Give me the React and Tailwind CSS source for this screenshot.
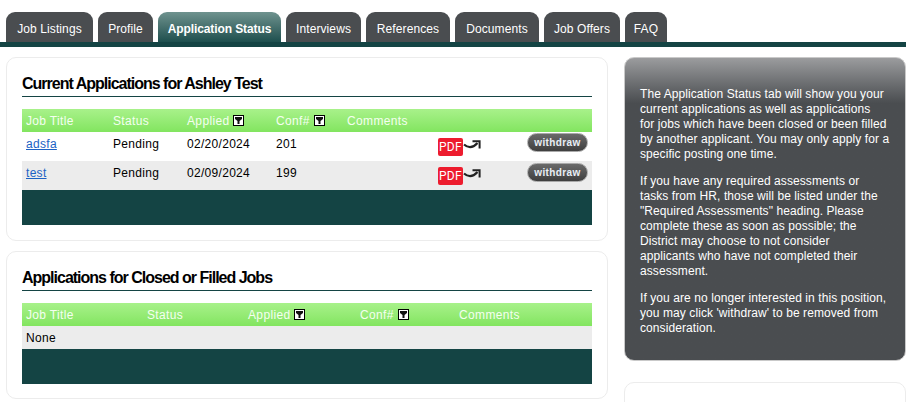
import React from "react";

const tabs = [
  { label: "Job Listings", w: "w-[87px]" },
  { label: "Profile", w: "w-[55px]" },
  { label: "Application Status", w: "w-[123px]", active: true },
  { label: "Interviews", w: "w-[75px]" },
  { label: "References", w: "w-[84px]" },
  { label: "Documents", w: "w-[84px]" },
  { label: "Job Offers", w: "w-[76px]" },
  { label: "FAQ", w: "w-[42px]" },
];

const SortIcon = () => (
  <span className="ml-[4px] inline-flex h-[11px] w-[11px] items-center justify-center border border-black bg-white">
    <svg width="7" height="7" viewBox="0 0 7 7">
      <path d="M0 0H7V2L4.5 4V7H2.5V4L0 2Z" fill="#111" />
    </svg>
  </span>
);

const PdfIcon = () => (
  <div className="flex items-start">
    <span className="flex h-[18px] w-[25px] items-center justify-center rounded-[2px] bg-[#ed1c2e] text-[12px] leading-none text-white [font-family:'Roboto',sans-serif]">
      PDF
    </span>
    <svg width="18" height="12" viewBox="0 0 18 12" className="mt-[2px]">
      <path d="M1 4.5C5 8 10 8 14.5 3" fill="none" stroke="#222" strokeWidth="2.2" />
      <path d="M9.5 1.2H16.6V8.5" fill="none" stroke="#222" strokeWidth="2" />
    </svg>
  </div>
);

const WithdrawButton = () => (
  <span className="flex h-[19px] w-[61px] items-center justify-center rounded-full border border-[#a9a9a9] bg-gradient-to-b from-[#6a6a6a] to-[#3f3f3f] text-[10px] font-bold leading-none tracking-[0.4px] text-[#e8eef5]">
    withdraw
  </span>
);

const HeaderCell = ({ w, sort, children }) => (
  <div className={`flex items-center ${w}`}>
    {children}
    {sort && <SortIcon />}
  </div>
);

const TableHeader = ({ cols }) => (
  <div className="flex h-[23px] items-center bg-gradient-to-b from-[#a8f18a] to-[#82e55f] pl-[4px] text-[12px] tracking-[0.35px] text-[#f4fff0]">
    {cols.map((c) => (
      <HeaderCell key={c.label} w={c.w} sort={c.sort}>
        {c.label}
      </HeaderCell>
    ))}
  </div>
);

const AppRow = ({ title, date, conf, shaded }) => (
  <div className={`flex h-[29px] pl-[4px] text-[12px] tracking-[0.3px] text-black ${shaded ? "bg-[#ececec]" : "bg-white"}`}>
    <a href="#" className="mt-[5px] h-[15px] w-[87px] leading-[15px]">
      <span className="text-[#1c62c4] underline">{title}</span>
    </a>
    <div className="mt-[5px] w-[74px] leading-[15px]">Pending</div>
    <div className="mt-[5px] w-[89px] leading-[15px]">{date}</div>
    <div className="mt-[5px] w-[162px] leading-[15px]">{conf}</div>
    <div className="mt-[6px] w-[89px]">
      <PdfIcon />
    </div>
    <div className={shaded ? "mt-[2px]" : "mt-[1px]"}>
      <WithdrawButton />
    </div>
  </div>
);

const Card = ({ title, className, children }) => (
  <section className={`rounded-[10px] border border-[#ececec] bg-white px-[15px] ${className}`}>
    <h2 className="h-[39px] border-b border-[#144444] pt-[16px] text-[16px] font-bold leading-[20px] tracking-[-1px] text-black">
      {title}
    </h2>
    {children}
  </section>
);

const App = () => {
  return (
    <div className="h-[402px] w-[906px] overflow-hidden bg-white text-[12px] [font-family:'Liberation_Sans',Arial,sans-serif]">
      <nav className="flex h-[47px] items-end gap-[5px] border-b-[5px] border-[#144444] pl-[6px]">
        {tabs.map((t) => (
          <div
            key={t.label}
            className={`flex h-[30px] items-center justify-center rounded-t-[9px] pt-[4px] text-[12px] text-white ${t.w} ${
              t.active ? "bg-gradient-to-b from-[#6f938f] to-[#1d4f4e] font-bold tracking-[-0.1px]" : "bg-[#4a4d50] tracking-[0.1px]"
            }`}
          >
            {t.label}
          </div>
        ))}
      </nav>

      <div className="flex pl-[6px] pt-[10px]">
        <div className="flex w-[602px] flex-col gap-[10px]">
          <Card title="Current Applications for Ashley Test" className="h-[184px]">
            <div className="mt-[12px]">
              <TableHeader
                cols={[
                  { label: "Job Title", w: "w-[87px]" },
                  { label: "Status", w: "w-[74px]" },
                  { label: "Applied", w: "w-[89px]", sort: true },
                  { label: "Conf#", w: "w-[71px]", sort: true },
                  { label: "Comments", w: "w-[91px]" },
                ]}
              />
              <AppRow title="adsfa" date="02/20/2024" conf="201" />
              <AppRow title="test" date="02/09/2024" conf="199" shaded />
              <div className="h-[35px] bg-[#144444]" />
            </div>
          </Card>

          <Card title="Applications for Closed or Filled Jobs" className="h-[148px]">
            <div className="mt-[12px]">
              <TableHeader
                cols={[
                  { label: "Job Title", w: "w-[121px]" },
                  { label: "Status", w: "w-[101px]" },
                  { label: "Applied", w: "w-[112px]", sort: true },
                  { label: "Conf#", w: "w-[99px]", sort: true },
                  { label: "Comments", w: "w-[91px]" },
                ]}
              />
              <div className="h-[23px] bg-[#ececec] pl-[4px] pt-[5px] leading-[15px] tracking-[0.3px] text-black">
                None
              </div>
              <div className="h-[35px] bg-[#144444]" />
            </div>
          </Card>
        </div>

        <aside className="ml-[16px] flex w-[282px] flex-col gap-[21px]">
          <div className="h-[304px] whitespace-nowrap rounded-[10px] border border-[#c9c9c9] bg-gradient-to-b from-[#9b9c9e] from-0% to-[#4a4d50] to-[15%] px-[15px] pt-[29px] text-[12px] leading-[15px] tracking-[0.08px] text-white">
            <p>
              The Application Status tab will show you your<br />
              current applications as well as applications<br />
              for jobs which have been closed or been filled<br />
              by another applicant. You may only apply for a<br />
              specific posting one time.
            </p>
            <p className="mt-[12px]">
              If you have any required assessments or<br />
              tasks from HR, those will be listed under the<br />
              "Required Assessments" heading. Please<br />
              complete these as soon as possible; the<br />
              District may choose to not consider<br />
              applicants who have not completed their<br />
              assessment.
            </p>
            <p className="mt-[12px]">
              If you are no longer interested in this position,<br />
              you may click 'withdraw' to be removed from<br />
              consideration.
            </p>
          </div>
          <div className="h-[60px] rounded-[10px] border border-[#ececec] bg-white" />
        </aside>
      </div>
    </div>
  );
};

export default App;
